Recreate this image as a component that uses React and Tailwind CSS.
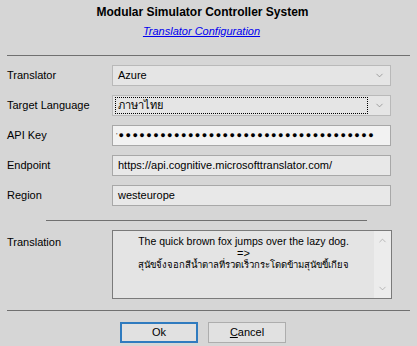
import { ChevronDown, ChevronUp } from 'lucide-react'

const THAI = 'สุนัขจิ้งจอกสีน้ำตาลที่รวดเร็วกระโดดข้ามสุนัขขี้เกียจ'

function Label({ children, className = '' }) {
  return <div className={`w-[112px] shrink-0 pl-[7px] text-[11px] text-black ${className}`}>{children}</div>
}

function Dropdown({ value, focused }) {
  return (
    <div className="flex h-[21px] w-[279px] items-center border border-[#b9b9b9] bg-[#e5e5e5] pl-[2px] pr-[5px]">
      <div
        className={`flex h-[17px] flex-1 items-center pl-[2px] ${focused ? 'border border-dotted border-black' : 'border border-transparent'}`}
      >
        {value}
      </div>
      <ChevronDown size={11} strokeWidth={1.5} className="ml-[6px] text-[#808080]" />
    </div>
  )
}

function Edit({ children, className = '' }) {
  return (
    <div className={`flex h-[21px] w-[279px] items-center border border-[#a8a8a8] bg-[#e8e8e8] px-[5px] ${className}`}>
      {children}
    </div>
  )
}

export default function App() {
  return (
    <div
      className="h-[346px] w-[417px] overflow-hidden bg-[#d6d6d6] text-[11px] text-black"
      style={{ fontFamily: '"Liberation Sans", "Noto Sans", sans-serif' }}
    >
      <div className="w-[405px] pt-[5px] text-center text-[12px] font-bold leading-[15px]">
        Modular Simulator Controller System
      </div>
      <div className="mt-[5px] w-[403px] text-center text-[11px] italic leading-[13px] text-[#0000ee] underline">
        Translator Configuration
      </div>
      <div className="mx-[7px] mt-[17px] h-px bg-[#707070]" />

      <div className="mt-[9px] flex flex-col gap-[9px]">
        <div className="flex items-center">
          <Label>Translator</Label>
          <Dropdown value="Azure" />
        </div>
        <div className="flex items-center">
          <Label>Target Language</Label>
          <Dropdown value="ภาษาไทย" focused />
        </div>
        <div className="flex items-center">
          <Label>API Key</Label>
          <Edit className="overflow-hidden border-[#7a7a7a] bg-[#f2f2f2] pl-[3px]">
            <span className="mr-[1px] text-[8px] text-[#444]">'</span>
            <span className="whitespace-nowrap text-[9px] leading-none tracking-[1.5px] text-black">
              {'●'.repeat(37)}
            </span>
          </Edit>
        </div>
        <div className="flex items-center">
          <Label>Endpoint</Label>
          <Edit>https://api.cognitive.microsofttranslator.com/</Edit>
        </div>
        <div className="flex items-center">
          <Label>Region</Label>
          <Edit>westeurope</Edit>
        </div>
      </div>

      <div className="ml-[46px] mt-[14px] h-px w-[321px] bg-[#707070]" />

      <div className="mt-[9px] flex items-start">
        <Label className="pt-[4px]">Translation</Label>
        <div className="flex h-[69px] w-[280px] border border-[#7a7a7a] bg-[#e4e4e4]">
          <div className="flex-1 pt-[4px] text-center leading-[12px]">
            <div className="text-[10.5px]">The quick brown fox jumps over the lazy dog.</div>
            <div>=&gt;</div>
            <div className="text-[9.5px]">{THAI}</div>
          </div>
          <div className="flex w-[17px] flex-col items-center justify-between bg-[#ececec] py-[4px]">
            <ChevronUp size={11} strokeWidth={1.5} className="text-[#a0a0a0]" />
            <ChevronDown size={11} strokeWidth={1.5} className="text-[#a0a0a0]" />
          </div>
        </div>
      </div>

      <div className="mx-[7px] mt-[11px] h-px bg-[#707070]" />

      <div className="mt-[11px] flex gap-[10px] pl-[120px]">
        <button className="h-[21px] w-[78px] border-2 border-[#2f7bbf] bg-[#e1e1e1] text-[11px]">Ok</button>
        <button className="h-[21px] w-[78px] border border-[#adadad] bg-[#e1e1e1] text-[11px]">
          <span className="underline">C</span>ancel
        </button>
      </div>
    </div>
  )
}
